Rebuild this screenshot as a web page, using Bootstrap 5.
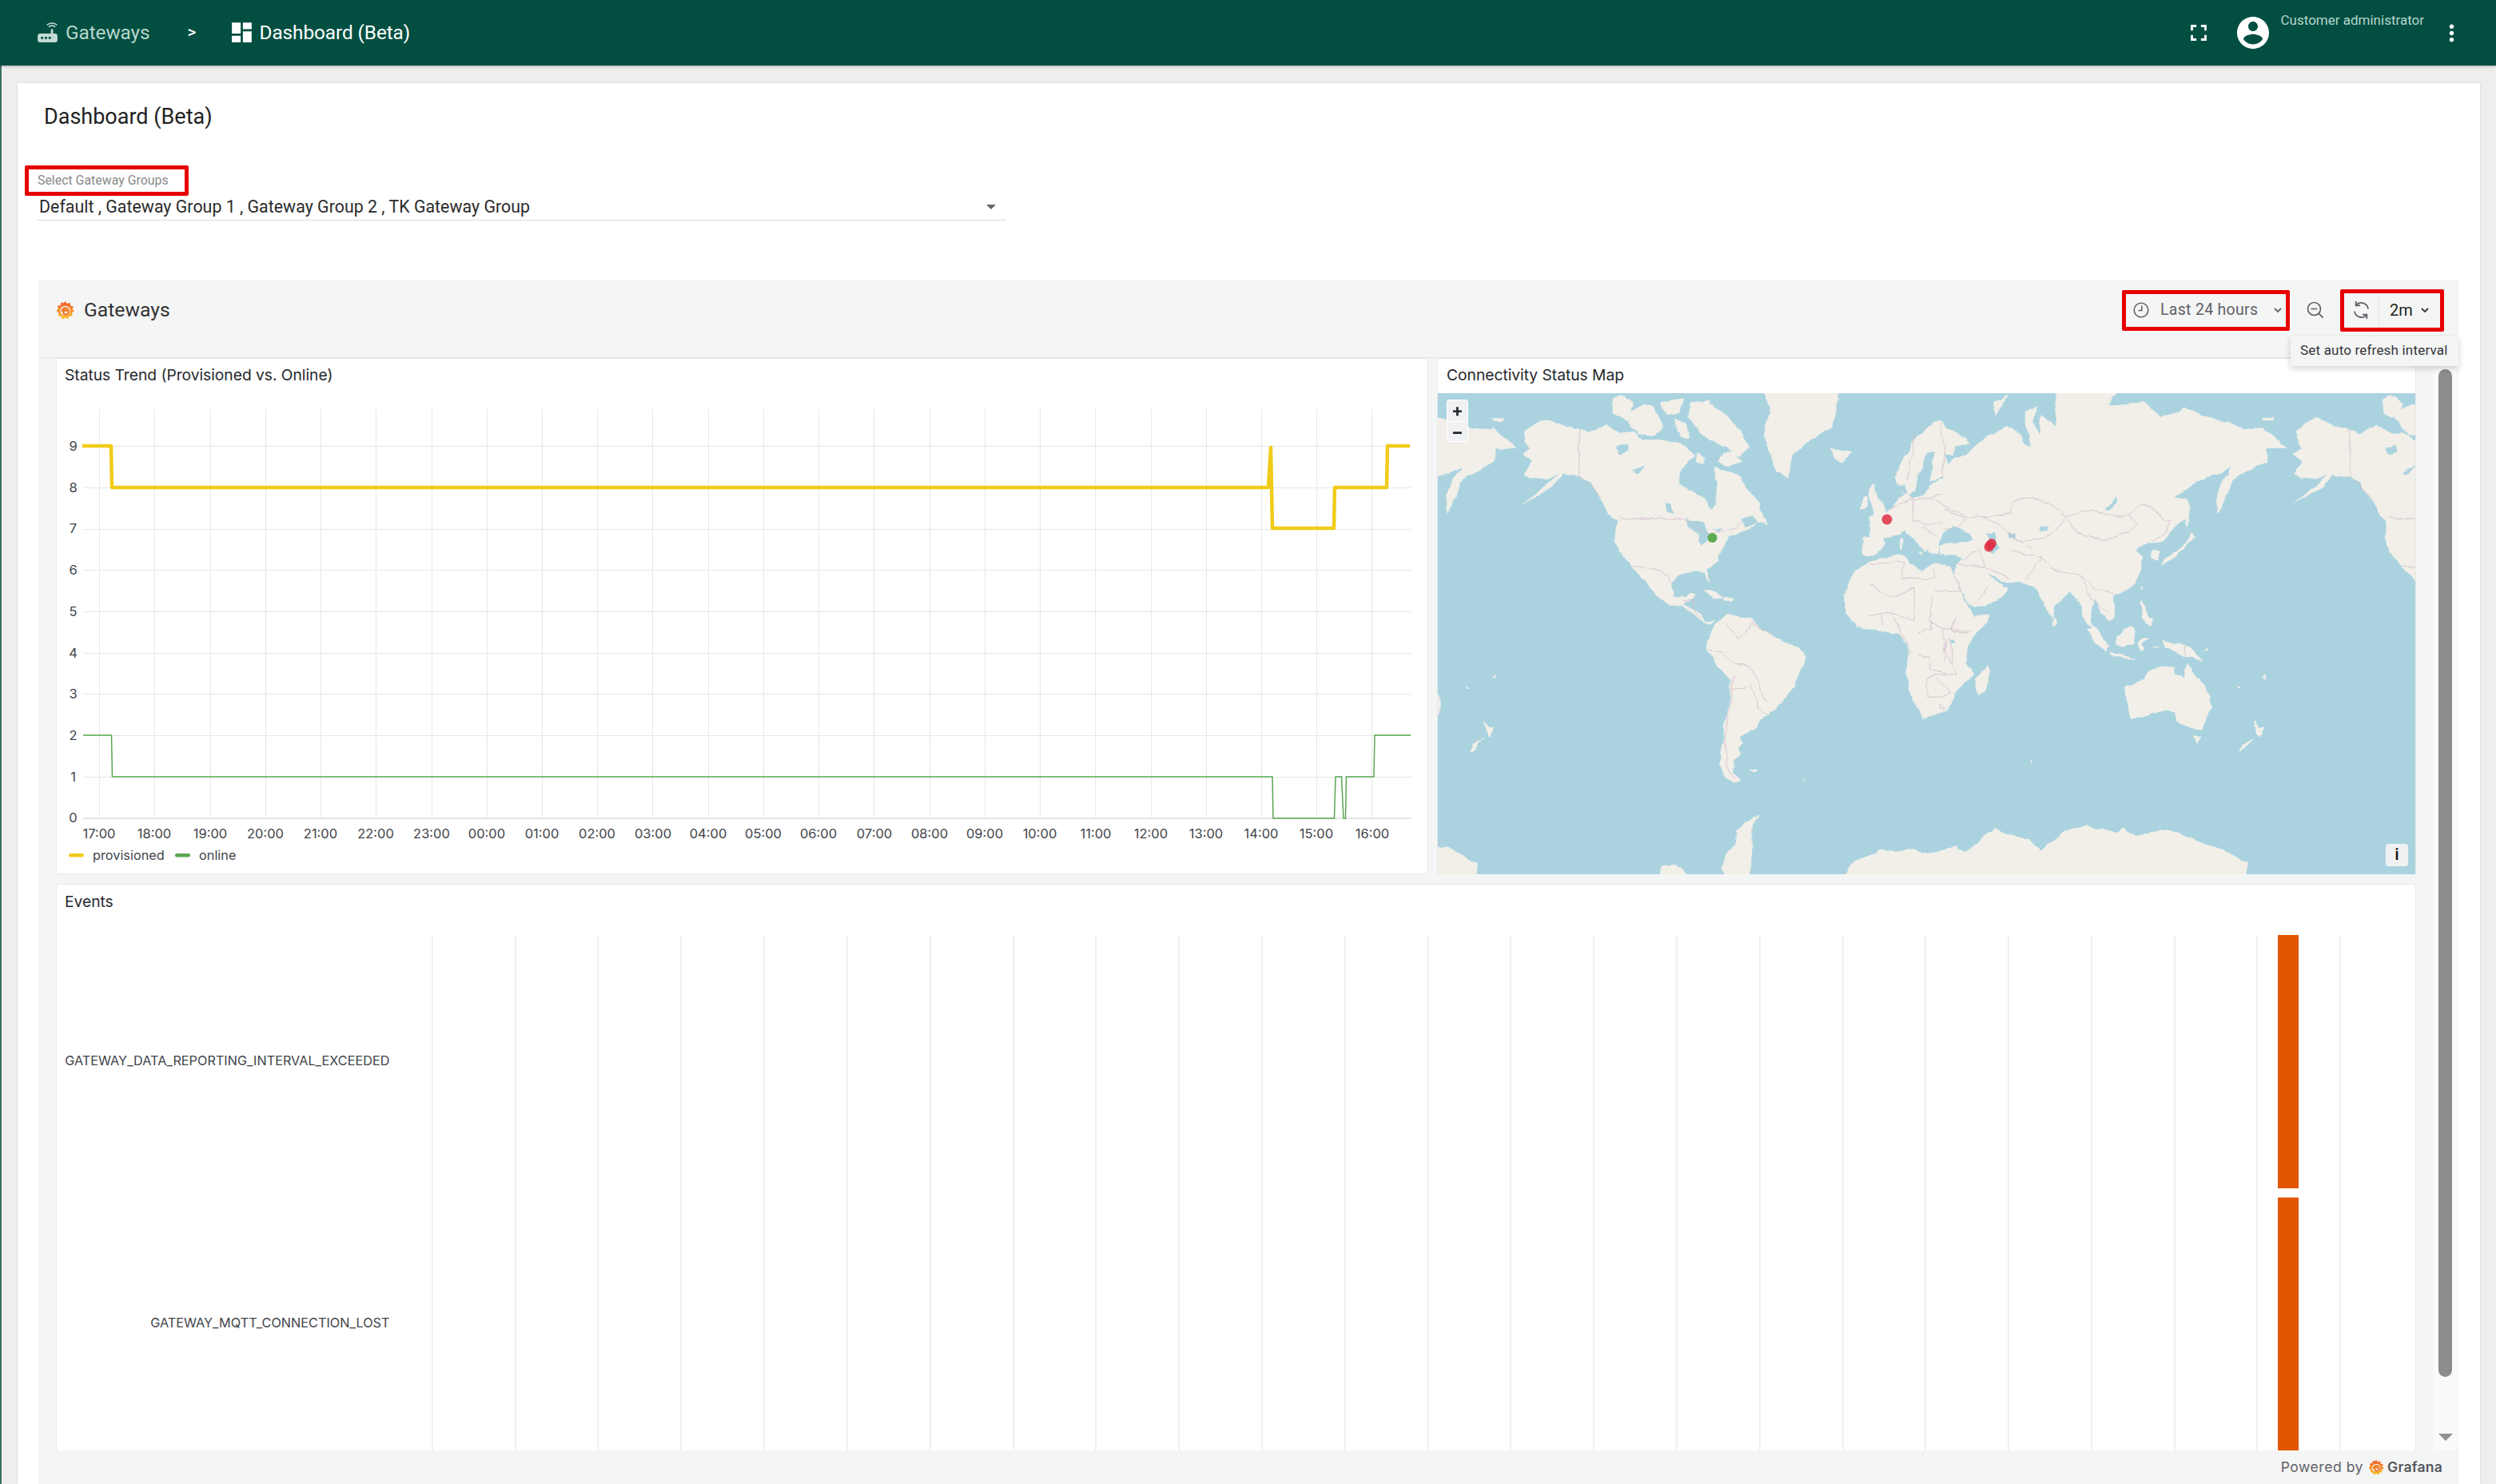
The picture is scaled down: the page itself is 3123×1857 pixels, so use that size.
<!DOCTYPE html>
<html lang="en">
<head>
<meta charset="utf-8">
<title>Dashboard (Beta)</title>
<link href="https://cdn.jsdelivr.net/npm/bootstrap@5.3.0/dist/css/bootstrap.min.css" rel="stylesheet">
<style>
html,body{height:100%;overflow:hidden}
body{background:#eee;font-family:Roboto,"Liberation Sans",sans-serif;color:#222}
.topbar{height:82px;background:#024f41;box-shadow:0 1px 3px rgba(0,0,0,.3);padding:0 0 0 47px;position:relative;z-index:2}
.crumb{font-size:24.4px;color:#b7d5cc;letter-spacing:-.1px}
.crumb-now{color:#fff}
.crumb-sep{font-size:21px;color:#fff;font-weight:500;width:103px;padding-left:47px}
.crumb svg{display:block}
.ico-router{width:33px;height:33px;margin:0 6px 0 -4px;fill:#c3dbd3}
.ico-dash{width:33px;height:33px;margin:0 6px 0 -5px;fill:#fff}
.ico-full{width:34px;height:34px;fill:#fff;margin-right:27px}
.ico-user{width:48px;height:48px;fill:#fff;margin-right:11px}
.ico-more{width:33px;height:33px;fill:#fff;margin:0 39px 0 18px}
.user-name{font-size:17px;color:#b7d5cc;align-self:flex-start;margin-top:13px;white-space:nowrap}
.page-wrap{height:calc(100vh - 82px);padding:22px 20px 0 20px;border-left:2px solid #3d6d62}
.sheet{height:100%;background:#fff;box-shadow:0 0 3px rgba(0,0,0,.12);padding:0 27px 0 26px;overflow:hidden}
.sheet-title{font-size:27px;line-height:36px;padding:24px 0 0 7px;height:103px;margin:0;font-weight:400}
.sel-label{display:block;width:205px;height:38px;margin-left:-17px;border:5px solid #e60000;border-radius:2px;font-size:15.9px;line-height:28px;padding-left:11px;color:#8a8a8a;white-space:nowrap}
.sel-value{width:1212px;height:31px;border-bottom:1px solid #dcdcdc;font-size:21.4px;line-height:26px;padding:0 0 2px 2px;margin-left:-1px;color:#2b2b2b}
.sel-caret{width:0;height:0;border-left:6px solid transparent;border-right:6px solid transparent;border-top:6px solid #666;margin-right:13px}
.gf-shell{margin-top:75px;background:#f4f5f5;height:1600px;font-family:Inter,Roboto,sans-serif}
.gf-head{height:97px;padding:0 18px 22px 22px;border-bottom:1px solid #e2e3e4;position:relative}
.gf-name{font-family:Roboto,sans-serif;font-size:24.7px;color:#333;margin-left:12px}
.red-box{border:5px solid #e60000;border-radius:2px;color:#5f6167;font-family:Roboto,sans-serif}
.time-box{width:210px;height:51px;padding-left:9px;font-size:19.5px}
.time-box span{margin:0 19px 0 14px;letter-spacing:.3px;white-space:nowrap}
.gap-icon{width:63px}
.refresh-box{width:130px;height:53px;padding-left:11px;font-size:20px}
.refresh-box .val{color:#222;font-weight:400;border-left:1px solid #e4e4e4;margin-left:11px;padding:0 9px 0 13px;height:38px;line-height:38px}
.tip{position:absolute;right:0;top:70px;width:210px;height:37px;background:#f4f5f5;box-shadow:0 3px 8px rgba(0,0,0,.18);font-size:17.1px;line-height:35px;padding-left:12px;color:#34363a;white-space:nowrap;overflow:hidden;z-index:3;letter-spacing:.15px;font-family:Roboto,sans-serif}
.gf-body{padding-left:22px}
.gf-main{width:2953px}
.gf-panel{background:#fff;border:1px solid #e8e9ea}
.gf-row{gap:11px;margin-bottom:12px}
.panel-a{width:1717px;height:646px}
.panel-b{width:1225px;height:646px}
.panel-a .panel-t,.panel-b .panel-t{line-height:41px}
.panel-b .panel-t{padding-left:11px}
.panel-c{width:2953px;height:709px;border-bottom:0}
.panel-t{height:43px;font-size:19.3px;font-weight:420;line-height:43px;padding-left:10px;color:#26282c;letter-spacing:-.05px;white-space:nowrap}
.panel-a svg,.panel-b svg,.panel-c svg{display:block}
.chart-t{font-family:Inter,sans-serif;font-size:16.5px;fill:#41444a}
.legend-t{font-family:Inter,sans-serif;font-size:16.3px;fill:#41444a}
.ev-t{font-family:Inter,sans-serif;font-size:16.25px;fill:#41444a}
.map-holder{position:relative;width:1223px;height:602px;overflow:hidden}
.map-ctl{position:absolute;left:11px;top:8px;width:27px;height:53px;background:#f0f1f3;border:1px solid #fff;border-radius:3px;font-size:22px;font-weight:700;line-height:24px;text-align:center;color:#22252a}
.map-ctl div+div{border-top:1px solid #fff}
.map-ctl div{height:26px}
.map-info{position:absolute;right:9px;bottom:10px;width:28px;height:28px;background:#f0f1f3;border-radius:4px;font-size:19px;font-weight:600;line-height:28px;text-align:center;color:#111}
.land{fill:#f2efe9}
.water{fill:#aad3df}
.bord{fill:none;stroke:#d3bcc8;stroke-width:1;vector-effect:non-scaling-stroke;opacity:.85}
.scroll-track{width:29px;margin-left:22px;height:1367px;background:#fafafa;padding:14px 6px 0 6px}
.scroll-thumb{height:1261px;background:#8c8c8c;border-radius:9px}
.scroll-arrow{width:0;height:0;margin-top:71px;border-left:9px solid transparent;border-right:9px solid transparent;border-top:9px solid #8f9093}
.gf-foot{height:42px;padding-right:19px;font-size:17.6px;color:#5f6167;letter-spacing:.5px;width:3027px}
.gf-foot b{font-weight:600;margin-left:4px;letter-spacing:.2px;color:#55585c}
.gf-foot svg{margin-left:6px}
</style>
</head>
<body>
<nav class="topbar d-flex align-items-center">
  <div class="crumb d-flex align-items-center">
    <svg class="ico-router" viewBox="0 0 24 24"><path d="M20.2 5.9l.8-.8C19.6 3.7 17.8 3 16 3s-3.6.7-5 2.1l.8.8C13 4.8 14.5 4.2 16 4.2s3 .6 4.2 1.7zm-.9.8c-.9-.9-2.1-1.4-3.3-1.4s-2.4.5-3.3 1.4l.8.8c.7-.7 1.6-1 2.5-1 .9 0 1.8.3 2.5 1l.8-.8zM19 13h-2V9h-2v4H5c-1.1 0-2 .9-2 2v4c0 1.1.9 2 2 2h14c1.1 0 2-.9 2-2v-4c0-1.1-.9-2-2-2zM8 18H6v-2h2v2zm3.5 0h-2v-2h2v2zm3.5 0h-2v-2h2v2z"/></svg>
    <span>Gateways</span>
  </div>
  <div class="crumb-sep">&gt;</div>
  <div class="crumb crumb-now d-flex align-items-center">
    <svg class="ico-dash" viewBox="0 0 24 24"><path d="M3 13h8V3H3v10zm0 8h8v-6H3v6zm10 0h8V11h-8v10zm0-18v6h8V3h-8z"/></svg>
    <span>Dashboard (Beta)</span>
  </div>
  <div class="ms-auto d-flex align-items-center h-100">
    <svg class="ico-full" viewBox="0 0 24 24"><path d="M7 14H5v5h5v-2H7v-3zm-2-4h2V7h3V5H5v5zm12 7h-3v2h5v-5h-2v3zM14 5v2h3v3h2V5h-5z"/></svg>
    <svg class="ico-user" viewBox="0 0 24 24"><path d="M12 2C6.48 2 2 6.48 2 12s4.48 10 10 10 10-4.48 10-10S17.52 2 12 2zm0 3c1.66 0 3 1.34 3 3s-1.34 3-3 3-3-1.34-3-3 1.34-3 3-3zm0 14.2c-2.5 0-4.71-1.28-6-3.22.03-1.99 4-3.08 6-3.08 1.99 0 5.97 1.09 6 3.08-1.29 1.94-3.5 3.22-6 3.22z"/></svg>
    <div class="user-name">Customer administrator</div>
    <svg class="ico-more" viewBox="0 0 24 24"><path d="M12 8c1.1 0 2-.9 2-2s-.9-2-2-2-2 .9-2 2 .9 2 2 2zm0 2c-1.1 0-2 .9-2 2s.9 2 2 2 2-.9 2-2-.9-2-2-2zm0 6c-1.1 0-2 .9-2 2s.9 2 2 2 2-.9 2-2-.9-2-2-2z"/></svg>
  </div>
</nav>

<div class="page-wrap">
  <main class="sheet">
    <h1 class="sheet-title">Dashboard (Beta)</h1>
    <label class="sel-label">Select Gateway Groups</label>
    <div class="sel-value d-flex align-items-center justify-content-between">
      <span>Default , Gateway Group 1 , Gateway Group 2 , TK Gateway Group</span><i class="sel-caret"></i>
    </div>

    <section class="gf-shell">
      <header class="gf-head d-flex align-items-center">
        <svg width="23" height="25" viewBox="0 0 24 26">
          <defs><linearGradient id="gflogo" x1="0" y1="1" x2="0" y2="0"><stop offset="0" stop-color="#fcc32c"/><stop offset="1" stop-color="#ef5a28"/></linearGradient></defs>
          <path fill="url(#gflogo)" d="M12 1l2.600 3.200 3.700-1.400.7 3.900 3.900 1-1.300 3.800L24 14l-3.200 2.400.6 3.900-4 .3-1.700 3.600-3.700-1.500-3.500 1.900-1.500-3.700-3.900-.7.6-3.900L.5 13.500l2.600-3L2 6.800l3.900-.6 1.100-3.900 3 1.100z"/>
          <circle cx="12.200" cy="13.500" r="6.500" fill="#f4f5f5"/>
          <path d="M8 14.500a4.300 4.300 0 1 1 4.500 4 3 3 0 0 1-.8-5.800 2 2 0 0 1 2.300 1.800" fill="none" stroke="#f27a22" stroke-width="2.500"/>
        </svg>
        <span class="gf-name">Gateways</span>
        <div class="ms-auto d-flex align-items-center">
          <div class="red-box time-box d-flex align-items-center">
            <svg width="20" height="20" viewBox="0 0 20 20" fill="none" stroke="#5f6167" stroke-width="1.600"><circle cx="10" cy="10" r="8.800"/><path d="M10.800 4.500v6H6.500"/></svg>
            <span>Last 24 hours</span>
            <svg width="12" height="8" viewBox="0 0 12 8" fill="none" stroke="#5f6167" stroke-width="1.800"><path d="M2 2l4 4 4-4"/></svg>
          </div>
          <div class="gap-icon d-flex justify-content-center">
            <svg width="22" height="22" viewBox="0 0 22 22" fill="none" stroke="#5f6167" stroke-width="1.700"><circle cx="9.500" cy="9.500" r="8"/><path d="M5.500 9.500h8M15.200 15.200l5.300 5.500"/></svg>
          </div>
          <div class="red-box refresh-box d-flex align-items-center">
            <svg width="21" height="24" viewBox="0 0 21 24" fill="none" stroke="#5f6167" stroke-width="1.800"><path d="M19 10.500A8.600 8.600 0 0 0 4 5.800M2 13.500a8.600 8.600 0 0 0 15 4.700"/><path d="M3.700 1v5.400h5.400M17.300 23v-5.400h-5.400"/></svg>
            <div class="val">2m</div>
            <svg width="12" height="8" viewBox="0 0 12 8" fill="none" stroke="#33353a" stroke-width="1.800"><path d="M2 2l4 4 4-4"/></svg>
          </div>
        </div>
        <div class="tip">Set auto refresh interval</div>
      </header>

      <div class="gf-body d-flex align-items-start">
        <div class="gf-main">
          <div class="gf-row d-flex">
            <article class="gf-panel panel-a">
              <div class="panel-t">Status Trend (Provisioned vs. Online)</div>
              <svg width="1715" height="601" viewBox="72 492 1715 601">
                <path fill="none" stroke="#e6e7e8" stroke-width="1" d="M105 558.500H1767M105 610.500H1767M105 662.500H1767M105 713.500H1767M105 765.500H1767M105 817.500H1767M105 868.500H1767M105 920.500H1767M105 972.500H1767"/>
                <path fill="none" stroke="#dcdddf" stroke-width="1.500" d="M105 1024H1767"/>
                <path fill="none" stroke="#e6e7e8" stroke-width="1" d="M125.500 512V1024M194.500 512V1024M264.500 512V1024M333.500 512V1024M402.500 512V1024M471.500 512V1024M541.500 512V1024M610.500 512V1024M679.500 512V1024M748.500 512V1024M817.500 512V1024M887.500 512V1024M956.500 512V1024M1025.500 512V1024M1094.500 512V1024M1164.500 512V1024M1233.500 512V1024M1302.500 512V1024M1371.500 512V1024M1441.500 512V1024M1510.500 512V1024M1579.500 512V1024M1648.500 512V1024M1717.500 512V1024"/>
                <path fill="none" stroke="#5aa650" stroke-width="1.500" d="M105 920H140.500L141.500 972H1593L1594 1024H1670.500L1672 972H1679.500L1682 1024H1684.500L1685.500 972H1720L1721 920H1766"/>
                <path fill="none" stroke="#f0cc1a" stroke-width="4.500" stroke-linejoin="round" d="M104 558H140L141 610H1588L1591 560L1593 661H1670L1671 610H1736L1737 558H1765"/>
                <g class="chart-t" text-anchor="middle">
                  <text x="92.500" y="564">9</text><text x="92.500" y="616">8</text><text x="92.500" y="667">7</text><text x="92.500" y="719">6</text><text x="92.500" y="771">5</text><text x="92.500" y="823">4</text><text x="92.500" y="874">3</text><text x="92.500" y="926">2</text><text x="92.500" y="978">1</text><text x="92.500" y="1029">0</text>
                  <text x="125" y="1049">17:00</text><text x="194" y="1049">18:00</text><text x="264" y="1049">19:00</text><text x="333" y="1049">20:00</text><text x="402" y="1049">21:00</text><text x="471" y="1049">22:00</text><text x="541" y="1049">23:00</text><text x="610" y="1049">00:00</text><text x="679" y="1049">01:00</text><text x="748" y="1049">02:00</text><text x="818" y="1049">03:00</text><text x="887" y="1049">04:00</text><text x="956" y="1049">05:00</text><text x="1025" y="1049">06:00</text><text x="1095" y="1049">07:00</text><text x="1164" y="1049">08:00</text><text x="1233" y="1049">09:00</text><text x="1302" y="1049">10:00</text><text x="1372" y="1049">11:00</text><text x="1441" y="1049">12:00</text><text x="1510" y="1049">13:00</text><text x="1579" y="1049">14:00</text><text x="1648" y="1049">15:00</text><text x="1718" y="1049">16:00</text>
                </g>
                <rect x="87" y="1068" width="19" height="4.500" rx="2.200" fill="#f0cc1a"/>
                <text class="legend-t" x="117" y="1076">provisioned</text>
                <rect x="220" y="1068" width="19" height="4.500" rx="2.200" fill="#5aa650"/>
                <text class="legend-t" x="250" y="1076">online</text>
              </svg>
            </article>
            <article class="gf-panel panel-b">
              <div class="panel-t">Connectivity Status Map</div>
              <div class="map-holder">
                <svg width="1223" height="602" viewBox="1800 492 1223 602">
                  <defs>
                    <filter id="coast" color-interpolation-filters="sRGB" filterUnits="userSpaceOnUse" x="700" y="400" width="3400" height="800">
                      <feTurbulence type="fractalNoise" baseFrequency=".06" numOctaves="3" seed="4" result="n"/>
                      <feDisplacementMap in="SourceGraphic" in2="n" scale="7" xChannelSelector="R" yChannelSelector="G"/>
                      <feGaussianBlur stdDeviation=".4"/>
                    </filter>
                    <g id="world">
                      <g transform="translate(1800,490) scale(.357,.3333)">
                        <path class="land" d="M305 150L345 115 380 100 420 120 495 140 530 155 590 125 640 155 680 150 720 180 780 180 830 190 870 205 900 240 880 260 850 300 845 340 880 370 925 385 950 390 945 430 960 440 975 420 975 340 965 285 1010 290 1060 320 1090 370 1130 420 1125 445 1158 500 1120 490 1095 515 1060 530 1020 545 1000 590 980 610 985 640 945 670 950 720 935 680 900 675 850 685 820 720 830 770 870 775 885 755 900 760 880 790 860 800 890 815 925 830 935 860 975 855 960 875 930 865 905 840 860 810 810 795 765 770 730 715 680 660 635 600 620 560 625 490 590 450 570 400 530 340 495 320 440 310 400 360 340 395 290 425 340 385 380 350 420 310 370 330 320 325 300 310 330 260 295 230 325 215 310 190Z"/>
                        <path class="water" d="M850 310L875 270 915 270 935 285 965 290 975 340 975 420 950 440 940 400 900 375 860 350ZM870 480L930 490 945 530 960 545 925 575 910 530 875 500ZM960 515L1000 510 985 525ZM620 210L660 200 665 225 635 235ZM680 300L730 275 700 310ZM800 420L820 425 830 460 805 450ZM1060 480L1100 465 1120 490 1075 510Z"/>
                        <path class="land" d="M610 30L640 15 680 40 650 100 615 85ZM660 80L720 45 760 60 790 130 760 165 700 160 670 120ZM780 40L830 30 860 25 850 80 800 90ZM885 40L945 35 1000 80 1050 130 1090 210 1060 240 1030 225 960 180 920 160 880 90ZM830 100L870 120 880 175 845 170ZM905 225L940 250 930 270 905 260ZM1000 230L1040 225 1070 260 1020 280 985 260ZM1130 -30L1410 -30 1395 80 1380 130 1310 180 1250 230 1225 325 1190 300 1170 250 1150 190 1145 130 1165 80ZM1375 215L1410 215 1450 225 1440 250 1410 265 1385 250ZM190 100L220 95 222 108 192 110ZM925 745L955 745 1000 775 985 780 950 765ZM1000 775L1040 775 1030 785 1005 785ZM975 870L1015 835 1090 850 1130 885 1170 910 1200 940 1290 985 1285 1020 1260 1060 1240 1120 1200 1170 1180 1200 1020 1200 1030 1090 990 1040 950 980 945 945ZM1478 440L1495 395 1510 400 1505 435ZM1510 370L1525 345 1545 400 1568 440 1568 465 1520 475 1530 440 1520 420ZM1485 548L1560 540 1568 570 1540 610 1505 620 1490 605Z"/>
                        <path class="bord" d="M635 477H840L880 490 950 540 985 525 1040 510 1060 490M495 140V320L550 370 575 400M680 655L745 660 790 680 820 715M860 790L890 780 905 830 925 850M1010 870L1050 930 1100 870 1170 910M985 940L950 965 1030 960 1000 985 1040 1020 1110 1060 1130 1150 1155 1150M1040 1020V1100L1020 1180M1430 800L1490 700 1510 720V800L1568 810M1430 830L1480 850 1520 890M1465 830V880M1520 850H1568"/>
                      </g>
                      <g transform="translate(2000,800) scale(.3333,.3333)">
                        <path class="land" d="M415 0H680L780 45 785 70 755 120 740 180 680 210 670 240 640 285 610 300 605 330 570 345 540 365 545 390 525 420 535 435 515 460 510 510 540 530 510 540 480 520 460 470 460 420 475 370 470 330 490 280 500 150 450 105 415 40ZM578 487L600 485 595 495 580 495ZM762 518L778 528 770 532ZM235 915L240 850 290 845 330 870 380 915ZM485 915L465 855 480 800 515 775 520 720 555 685 615 660 580 700 575 915ZM905 915L960 830 1060 795 1180 790 1260 805 1350 770V915Z"/>
                        <path class="bord" d="M510 130L500 230 480 350 480 470 515 530M510 90L570 100 600 150 620 220 635 235M565 170L600 230 600 260 640 285M500 185L560 180M420 40L470 50 510 90M1175 140L1240 145 1330 120M1240 60V145M1230 150V220L1300 180 1320 200M1200 240L1230 220"/>
                      </g>
                      <g transform="translate(1800,440) scale(.8036,.4209)">
                        <path class="land" d="M632 720L650 650 675 622 724 602 735 630 754 649 773 630 800 642 809 689 820 745 833 776 836 788 861 780 853 808 836 847 825 879 822 927 835 960 805 1015 790 1070 755 1090 740 1040 730 970 735 890 720 840 680 825 650 820 635 775Z"/>
                      </g>
                      <g transform="translate(2340,490) scale(.44,.3333)">
                        <path class="land" d="M60 440L80 415 100 385 85 370 125 400 150 395 170 350 210 325 200 300 240 255 275 240 300 200 340 165 390 125 420 155 455 210 480 190 490 90 530 130 525 -30H720L680 50 780 40 830 95 900 65 960 90 1010 115 1070 140 1120 135 1190 215 1130 215 1130 260 1070 300 1035 330 1010 410 990 460 985 400 1000 340 1035 285 985 310 930 340 870 395 905 410 905 470 860 520 835 560 790 570 760 590 775 620 770 680 740 740 700 760 695 770 700 840 680 860 660 830 640 780 630 800 635 880 660 910 670 960 640 900 615 860 600 800 575 750 530 800 520 860 490 780 470 730 420 715 380 715 335 680 350 700 395 740 360 790 300 815 280 800 240 690 250 650 270 625 250 615 200 608 195 578 240 568 270 568 300 555 280 530 240 505 210 530 195 570 195 610 170 605 155 560 130 520 170 585 160 600 100 520 85 540 50 550 0 545 0 475 15 460Z"/>
                        <path class="land" d="M70 320L110 220 140 155 200 105 225 140 285 190 275 220 240 240 215 235 225 300 205 320 170 340 180 280 185 225 160 240 140 310 130 370 110 395 100 345 85 350ZM900 410L912 430 905 510 898 490ZM915 530L925 545 895 590 860 630 830 650 835 625 880 595 905 560ZM790 585L830 600 820 635 805 630 805 590ZM772 725L778 745 768 745ZM520 855L530 860 533 880 522 882ZM88 555L95 555 92 590 86 590ZM135 600L150 597 145 610ZM445 70L475 50 470 130 495 195 460 210 445 130ZM355 40L395 10 370 60 360 90ZM1125 100L1150 95 1145 110 1128 110ZM1470 70L1490 15 1520 40 1505 110 1480 95Z"/>
                        <path class="water" d="M330 530L355 525 360 560 370 590 350 610 335 590 345 565ZM140 320L165 230 185 225 180 280 170 340 150 340ZM245 200L285 195 270 225 240 240ZM395 530L415 530 415 550 400 550ZM480 510L510 505 505 525 485 525ZM670 445L700 390 705 410 680 445Z"/>
                        <path class="bord" d="M210 440L260 470 320 470 400 460 410 410 460 395 510 420 560 470 600 455 640 445 700 470 740 465 770 425 800 425 830 480 855 485 840 530 800 560M565 475L590 530 670 560 740 520 760 490 740 465M320 470L370 500 420 560 500 550 530 520 560 470M480 610L520 670 600 690 650 745 700 760M310 590L330 660 400 700M400 600L490 620 450 700M400 530L460 590M60 440L125 400V480M125 410L175 400 230 440 280 470 250 510 210 520M125 480L160 500 210 490M175 400L205 385M190 540L150 510M130 150L120 250 105 330M200 110L215 230 205 320M270 630L310 590M250 650L330 660M300 800L340 730M600 690L630 780 680 830M0 650L100 640 90 700 185 700 185 665M185 750H260L240 690M130 740L60 770 0 720M180 770L170 860 210 890 290 900M130 740L125 860 60 830 0 840M60 830L90 900 120 980M210 890L215 1010M240 1020L225 930M35 840V880"/>
                      </g>
                      <g transform="translate(2400,750) scale(.4018,.3333)">
                        <path class="land" d="M525 110L545 110 600 175 590 195 560 170ZM600 198L650 212 690 225 640 220 605 210ZM620 140L665 100 680 110 670 165 640 180 620 165ZM685 160L700 145 720 150 700 165 710 190 695 195ZM765 155L800 165 830 170 865 200 890 235 850 222 830 220 800 190 770 170ZM695 0L705 30 730 75 730 105 715 95 700 50 690 15ZM650 330L705 300 720 270 765 245 800 255 805 280 830 295 840 240 860 280 890 320 915 370 915 410 890 485 855 490 815 460 800 420 760 420 710 440 665 452 655 400ZM855 512L885 512 872 542ZM1045 450L1065 480 1083 480 1065 518 1055 490ZM1050 515L1030 545 1005 578 1015 545ZM218 250L224 270 210 345 190 365 178 345 185 290ZM1075 295L1090 285 1082 300ZM990 320L1005 332 998 335ZM880 195L908 180 905 190ZM735 178L760 178 745 183ZM350 603L358 608 350 612ZM0 945L50 958 110 925 150 945 240 862 350 905 385 940 460 870 530 850 620 880 640 860 680 885 780 868 880 910 960 945 1030 990 1025 1070H0Z"/>
                        <path class="water" d="M100 152L115 152 115 168 102 168Z"/>
                        <path class="bord" d="M832 172V220M90 150L85 190 110 245 125 280 95 280 30 295M0 210H35L40 265 95 280M60 295L100 350 70 370 30 370M30 295V370M45 75L40 115 0 125M120 70L110 120 160 125M75 395L85 408 70 410Z"/>
                      </g>
                    </g>
                  </defs>
                  <rect x="1800" y="491" width="1223" height="604" fill="#aad3df"/>
                  <g filter="url(#coast)">
                    <use href="#world" x="-964"/>
                    <use href="#world"/>
                    <use href="#world" x="964"/>
                  </g>
                  <circle cx="2143.500" cy="673" r="6" fill="#5cab50"/>
                  <circle cx="2362" cy="650" r="6.500" fill="#e02f44" opacity=".85"/>
                  <circle cx="2493" cy="680" r="6" fill="#e02f44" opacity=".85"/>
                  <circle cx="2491" cy="682" r="6" fill="#e02f44" opacity=".85"/>
                  <circle cx="2489.500" cy="684.500" r="6" fill="#e02f44" opacity=".85"/>
                </svg>
                <div class="map-ctl"><div>+</div><div>−</div></div>
                <div class="map-info">i</div>
              </div>
            </article>
          </div>
          <article class="gf-panel panel-c">
            <div class="panel-t">Events</div>
            <svg width="2951" height="665" viewBox="72 1150 2951 665">
              <path fill="none" stroke="#ececed" stroke-width="1.500" d="M542 1171V1815M646 1171V1815M749 1171V1815M853 1171V1815M957 1171V1815M1061 1171V1815M1165 1171V1815M1269 1171V1815M1372 1171V1815M1476 1171V1815M1580 1171V1815M1684 1171V1815M1788 1171V1815M1891 1171V1815M1995 1171V1815M2099 1171V1815M2203 1171V1815M2307 1171V1815M2410 1171V1815M2514 1171V1815M2618 1171V1815M2722 1171V1815M2825 1171V1815M2929 1171V1815"/>
              <rect x="2851" y="1170" width="26" height="317" fill="#e25600"/>
              <rect x="2851" y="1498.500" width="26" height="316.500" fill="#e25600"/>
              <text class="ev-t" x="488.500" y="1332.500" text-anchor="end">GATEWAY_DATA_REPORTING_INTERVAL_EXCEEDED</text>
              <text class="ev-t" x="488.500" y="1661" text-anchor="end">GATEWAY_MQTT_CONNECTION_LOST</text>
            </svg>
          </article>
        </div>
        <aside class="scroll-track">
          <div class="scroll-thumb"></div>
          <div class="scroll-arrow"></div>
        </aside>
      </div>
      <footer class="gf-foot d-flex align-items-center justify-content-end">
        <span>Powered by</span>
        <svg width="20" height="21" viewBox="0 0 24 26">
          <path fill="url(#gflogo)" d="M12 1l2.600 3.200 3.700-1.400.7 3.900 3.900 1-1.300 3.800L24 14l-3.200 2.400.6 3.900-4 .3-1.700 3.600-3.700-1.500-3.500 1.900-1.500-3.700-3.900-.7.6-3.900L.5 13.500l2.600-3L2 6.800l3.900-.6 1.100-3.900 3 1.100z"/>
          <circle cx="12.200" cy="13.500" r="6.500" fill="#f4f5f5"/>
          <path d="M8 14.500a4.300 4.300 0 1 1 4.500 4 3 3 0 0 1-.8-5.800 2 2 0 0 1 2.300 1.800" fill="none" stroke="#f27a22" stroke-width="2.500"/>
        </svg>
        <b>Grafana</b>
      </footer>
    </section>
  </main>
</div>
<script src="https://cdn.jsdelivr.net/npm/bootstrap@5.3.0/dist/js/bootstrap.bundle.min.js"></script>
</body>
</html>
